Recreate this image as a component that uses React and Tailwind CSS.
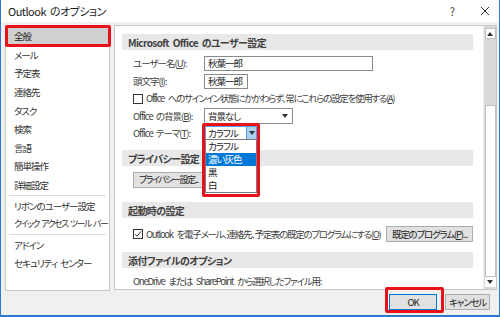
import React from 'react';

const navMain = ['全般', 'メール', '予定表', '連絡先', 'タスク', '検索', '言語', '簡単操作', '詳細設定'];

function Arrow({ up }) {
  return (
    <svg width="6" height="4" viewBox="0 0 6 4">
      <path d={up ? 'M0 4h6L3 0z' : 'M0 0h6L3 4z'} fill="#333" />
    </svg>
  );
}

function Check({ checked }) {
  return (
    <span className="w-[10px] h-[10px] border border-[#333] bg-white flex items-center justify-center shrink-0">
      {checked && (
        <svg width="8" height="8" viewBox="0 0 8 8">
          <path d="M1 4.3 3 6.3 7 1.4" stroke="#222" strokeWidth="1" fill="none" />
        </svg>
      )}
    </span>
  );
}

function Header({ children, className = '' }) {
  return (
    <div className={`h-[16px] bg-[#e8e8e8] pl-[6px] flex items-center font-bold text-[10px] tracking-[-0.6px] text-[#404040] ${className}`}>
      {children}
    </div>
  );
}

function Btn({ children, className = '' }) {
  return (
    <div className={`h-[16px] bg-[#e1e1e1] border border-[#adadad] flex items-center text-[#222] shrink-0 ${className}`}>
      {children}
    </div>
  );
}

function Sep() {
  return <div className="h-px bg-[#dcdcdc] mx-[3px] my-[0.5px]" />;
}

export default function App() {
  return (
    <div className="w-[500px] h-[317px] bg-[#f0f0f0] border-x border-b-2 border-[#2b79d0] flex flex-col text-[9.5px] text-[#333] font-['Noto_Sans_CJK_JP','Noto_Sans',sans-serif] [font-feature-settings:'palt'] tracking-[-1px] [word-spacing:2px] whitespace-nowrap overflow-hidden">
      {/* title bar */}
      <div className="h-[22px] bg-white flex items-center pl-[7px] shrink-0">
        <span className="text-[11px] tracking-[-0.5px] text-[#222]">Outlook のオプション</span>
        <span className="ml-auto text-[11px] text-[#444] mr-[26px]">?</span>
        <svg width="10" height="10" viewBox="0 0 10 10" className="mr-[9px]">
          <path d="M1 1 9 9M9 1 1 9" stroke="#333" strokeWidth="1" />
        </svg>
      </div>

      <div className="flex gap-[4px] pl-[4px] pt-[3px] h-[268px] shrink-0">
        {/* left nav */}
        <div className="w-[105px] h-[266px] bg-white border border-[#c8c8c8] pt-[1px]">
          {navMain.map((t, i) =>
            i === 0 ? (
              <div key={t} className="relative h-[18.6px] bg-[#d0d0d0] flex items-center pl-[8px] text-[#222]">
                {t}
                <div className="absolute -top-[2px] -bottom-[1px] -left-px -right-[2px] border-[3px] border-[#e8131a] rounded-[2px] pointer-events-none" />
              </div>
            ) : (
              <div key={t} className="h-[18.6px] flex items-center pl-[8px]">{t}</div>
            )
          )}
          <Sep />
          <div className="h-[18.6px] flex items-center pl-[8px]">リボンのユーザー設定</div>
          <div className="h-[18.6px] flex items-center pl-[8px] text-[9px] tracking-[-1.6px] [word-spacing:2px]">クイック アクセス ツール バー</div>
          <Sep />
          <div className="h-[18.6px] flex items-center pl-[8px]">アドイン</div>
          <div className="h-[18.6px] flex items-center pl-[8px]">セキュリティ センター</div>
        </div>

        {/* right panel */}
        <div className="w-[383px] h-[265px] bg-white border border-[#c8c8c8] flex">
          <div className="flex-1 overflow-hidden pl-[7px] pr-[10px] pt-[8px] text-[#404040]">
            <Header>Microsoft Office のユーザー設定</Header>
            <div className="pl-[11px] mt-[6px]">
              <div className="flex items-center h-[15px]">
                <span className="w-[71px]">ユーザー名(<u>U</u>):</span>
                <div className="w-[169px] h-[15px] border border-[#8a8a8a] flex items-center pl-[3px] text-[#222]">秋葉一郎</div>
              </div>
              <div className="flex items-center h-[15px] mt-[3px]">
                <span className="w-[71px]">頭文字(<u>I</u>):</span>
                <div className="w-[44px] h-[15px] border border-[#8a8a8a] flex items-center pl-[3px] text-[#222]">秋葉一郎</div>
              </div>
              <div className="flex items-center h-[15px] mt-[2px] gap-[3px]">
                <Check />
                <span className="tracking-[-1.3px] [word-spacing:3px]">Office へのサインイン状態にかかわらず、常にこれらの設定を使用する(<u>A</u>)</span>
              </div>
              <div className="flex items-center h-[16px] mt-[2px]">
                <span className="w-[71px]">Office の背景(<u>B</u>):</span>
                <div className="w-[89px] h-[16px] border border-[#8a8a8a] flex items-center pl-[3px] pr-[4px] text-[#222]">
                  背景なし
                  <span className="ml-auto"><Arrow /></span>
                </div>
              </div>
              <div className="flex items-center h-[14px] mt-[2px]">
                <span className="w-[72px]">Office テーマ(<u>T</u>):</span>
                <div className="relative">
                  <div className="w-[52px] h-[14px] border border-[#569de5] bg-white flex items-center pl-[2px] text-[#222]">
                    カラフル
                    <span className="ml-auto w-[10px] h-full bg-[#a8d0f0] border-l border-[#569de5] flex items-center justify-center">
                      <Arrow />
                    </span>
                  </div>
                  <div className="absolute top-[13px] left-0 w-[52px] bg-white border border-[#7a7a7a] text-[#222] z-10">
                    <div className="h-[13px] flex items-center pl-[2px]">カラフル</div>
                    <div className="h-[13px] flex items-center pl-[2px] bg-[#0078d7] text-white">濃い灰色</div>
                    <div className="h-[13px] flex items-center pl-[2px]">黒</div>
                    <div className="h-[13px] flex items-center pl-[2px]">白</div>
                  </div>
                  <div className="absolute -top-[3px] -left-[3px] w-[58px] h-[74px] border-[3px] border-[#e8131a] rounded-[2px] z-20 pointer-events-none" />
                </div>
              </div>
            </div>

            <Header className="mt-[10px]">プライバシー設定</Header>
            <div className="pl-[11px] mt-[6px]">
              <Btn className="w-[85px] pl-[5px] text-[9px] tracking-[-1.5px]">プライバシー設定...</Btn>
            </div>

            <Header className="mt-[14px]">起動時の設定</Header>
            <div className="pl-[11px] mt-[8px] flex items-center h-[16px]">
              <Check checked />
              <span className="ml-[3px] tracking-[-1.3px] [word-spacing:3px]">Outlook を電子メール、連絡先、予定表の既定のプログラムにする(<u>O</u>)</span>
              <Btn className="ml-auto w-[87px] justify-center tracking-[-1.2px]">既定のプログラム(<u>P</u>)...</Btn>
            </div>

            <Header className="mt-[10px]">添付ファイルのオプション</Header>
            <div className="pl-[11px] mt-[5px] h-[16px] flex items-center tracking-[-1.2px] [word-spacing:3px]">
              OneDrive または SharePoint から選択したファイル用:
            </div>
          </div>

          {/* scrollbar */}
          <div className="w-[13px] bg-[#dadada] flex flex-col items-center py-[2px] border-l border-[#f0f0f0]">
            <div className="w-[11px] h-[11px] bg-white border border-[#c0c0c0] flex items-center justify-center">
              <Arrow up />
            </div>
            <div className="w-[11px] mt-[66px] flex-1 bg-white border border-[#c0c0c0]" />
            <div className="w-[11px] h-[10px] bg-white flex items-center justify-center">
              <Arrow />
            </div>
          </div>
        </div>
      </div>

      {/* bottom buttons */}
      <div className="flex justify-end items-start gap-[8px] pr-[9px] pt-[4px]">
        <div className="relative">
          <div className="w-[48px] h-[16px] bg-[#e1e1e1] border border-[#0078d7] flex items-center justify-center text-[#222]">OK</div>
          <div className="absolute -top-[7px] -left-[4px] w-[59px] h-[26px] border-[3px] border-[#e8131a] rounded-[2px] pointer-events-none" />
        </div>
        <div className="w-[45px] h-[16px] bg-[#e1e1e1] border border-[#adadad] flex items-center justify-center text-[#222] tracking-[-1.2px]">キャンセル</div>
      </div>
    </div>
  );
}
